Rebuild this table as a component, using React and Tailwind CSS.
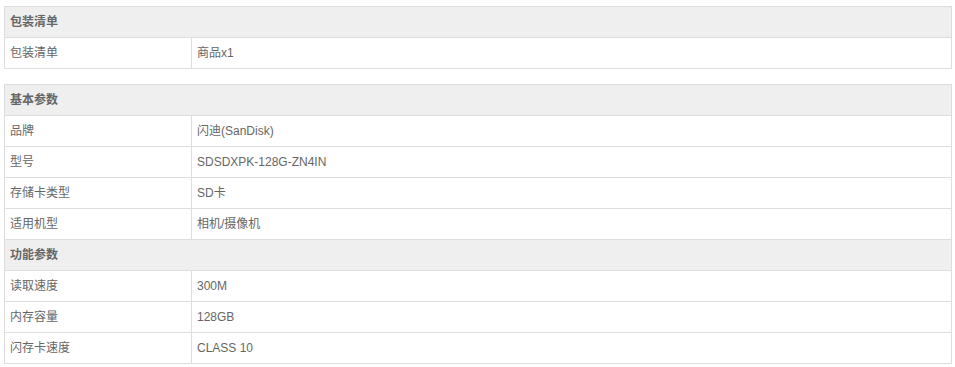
import React from 'react';

const groups = [
  {
    sections: [
      { title: '包装清单', rows: [['包装清单', '商品x1']] },
    ],
  },
  {
    sections: [
      {
        title: '基本参数',
        rows: [
          ['品牌', '闪迪(SanDisk)'],
          ['型号', 'SDSDXPK-128G-ZN4IN'],
          ['存储卡类型', 'SD卡'],
          ['适用机型', '相机/摄像机'],
        ],
      },
      {
        title: '功能参数',
        rows: [
          ['读取速度', '300M'],
          ['内存容量', '128GB'],
          ['闪存卡速度', 'CLASS 10'],
        ],
      },
    ],
  },
];

const SpecTable = ({ sections }) => (
  <table className="w-[948px] border-collapse border border-[#ddd] table-fixed">
    <colgroup>
      <col className="w-[187px]" />
      <col />
    </colgroup>
    <tbody>
      {sections.map((s) => (
        <React.Fragment key={s.title}>
          <tr className="h-[31px] bg-[#efefef]">
            <th colSpan={2} className="border border-[#ddd] px-[5px] text-left font-bold text-[#666]">
              {s.title}
            </th>
          </tr>
          {s.rows.map(([k, v]) => (
            <tr key={k} className="h-[31px] bg-white">
              <td className="border border-[#ddd] px-[5px] text-[#666]">{k}</td>
              <td className="border border-[#ddd] px-[5px] text-[#666]">{v}</td>
            </tr>
          ))}
        </React.Fragment>
      ))}
    </tbody>
  </table>
);

export default function App() {
  return (
    <div
      className="bg-white w-[955px] h-[367px] pl-[4px] pt-[6px] flex flex-col gap-[15px] text-[12px] leading-[30px]"
      style={{ fontFamily: '"Liberation Sans", "Noto Sans CJK SC", sans-serif' }}
    >
      {groups.map((g, i) => (
        <SpecTable key={i} sections={g.sections} />
      ))}
    </div>
  );
}
